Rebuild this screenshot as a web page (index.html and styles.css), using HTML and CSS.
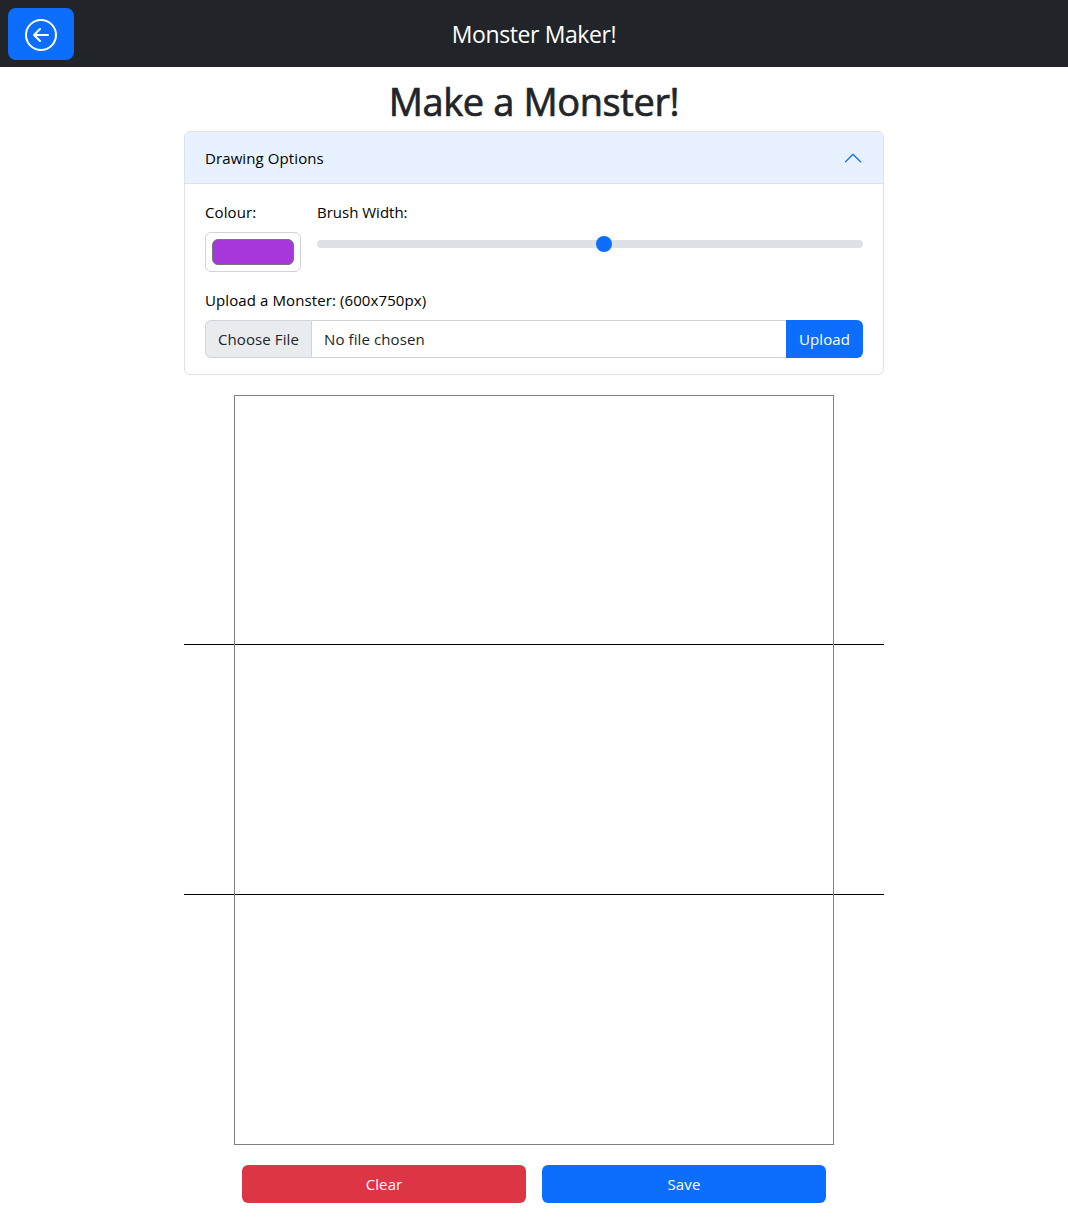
FILE: index.html
```html
<!DOCTYPE html>
<html lang="en">
<head>
<meta charset="utf-8">
<title>Monster Maker!</title>
<link rel="stylesheet" href="styles.css">
</head>
<body>
<header class="navbar">
  <button class="back" aria-label="Back">
    <svg width="32" height="32" viewBox="0 0 16 16" fill="currentColor"><path fill-rule="evenodd" d="M1 8a7 7 0 1 0 14 0A7 7 0 0 0 1 8m15 0A8 8 0 1 1 0 8a8 8 0 0 1 16 0m-4.500-.5a.5.5 0 0 1 0 1H5.707l2.147 2.146a.5.5 0 0 1-.708.708l-3-3a.5.5 0 0 1 0-.708l3-3a.5.5 0 1 1 .708.708L5.707 7.500z"/></svg>
  </button>
  <div class="brand">Monster Maker!</div>
</header>
<main class="page">
  <h1 class="title">Make a Monster!</h1>
  <section class="accordion">
    <div class="accordion-head">
      <span>Drawing Options</span>
      <svg class="chevron" width="20" height="20" viewBox="0 0 16 16" fill="currentColor"><path fill-rule="evenodd" d="M14.354 11.354a.5.5 0 0 1-.708 0L8 5.707l-5.646 5.647a.5.5 0 0 1-.708-.708l6-6a.5.5 0 0 1 .708 0l6 6a.5.5 0 0 1 0 .708"/></svg>
    </div>
    <div class="accordion-body">
      <div class="tools">
        <div class="field">
          <span>Colour:</span>
          <div class="colour"><div class="swatch"></div></div>
        </div>
        <div class="field grow">
          <span class="brush-label">Brush Width:</span>
          <div class="range"><div class="thumb"></div></div>
        </div>
      </div>
      <div class="field">
        <span>Upload a Monster: (600x750px)</span>
        <div class="file-group">
          <div class="choose">Choose File</div>
          <div class="filename">No file chosen</div>
          <button class="upload">Upload</button>
        </div>
      </div>
    </div>
  </section>
  <div class="board">
    <div class="guide"></div>
    <div class="guide"></div>
    <canvas class="canvas" width="598" height="748"></canvas>
  </div>
  <div class="actions">
    <button class="btn danger">Clear</button>
    <button class="btn primary">Save</button>
  </div>
</main>
</body>
</html>
```
FILE: styles.css
```css
* { box-sizing: border-box; }
body {
  margin: 0;
  background: #fff;
  color: #212529;
  font-family: "Open Sans", "Noto Sans", sans-serif;
  font-size: 15px;
  line-height: 24px;
  letter-spacing: 0.1px;
}
button { font: inherit; letter-spacing: inherit; border: 0; padding: 0; }
.navbar {
  display: grid;
  grid-template-columns: 66px 1fr 66px;
  align-items: center;
  height: 67px;
  padding: 0 8px;
  background: #212529;
  color: #fff;
}
.back {
  display: flex;
  align-items: center;
  justify-content: center;
  height: 52px;
  margin-top: 1px;
  padding-top: 2px;
  border-radius: 8px;
  background: #0d6efd;
  color: #fff;
}
.brand {
  padding-top: 1px;
  text-align: center;
  font-size: 23px;
  line-height: 36px;
  letter-spacing: -0.4px;
  white-space: nowrap;
}
.page { width: 700px; margin: 0 auto; padding-top: 10px; }
.title {
  margin: 0 0 6px;
  text-align: center;
  font-size: 38px;
  font-weight: 500;
  line-height: 48px;
  letter-spacing: -0.4px;
  -webkit-text-stroke: 0.7px currentColor;
  white-space: nowrap;
}
.accordion {
  border: 1px solid #dee2e6;
  border-radius: 6px;
  overflow: hidden;
  color: #000;
}
.accordion-head {
  display: flex;
  justify-content: space-between;
  align-items: center;
  height: 52px;
  padding: 0 20px;
  background: #e7f1ff;
  border-bottom: 1px solid #d9e0e8;
}
.chevron { color: #0d6efd; }
.accordion-body {
  display: flex;
  flex-direction: column;
  gap: 16px;
  padding: 16px 20px;
}
.tools { display: flex; gap: 16px; }
.field { display: flex; flex-direction: column; align-items: flex-start; gap: 8px; white-space: nowrap; }
.grow { flex: 1; }
.brush-label { letter-spacing: 0; }
.colour {
  width: 96px;
  height: 40px;
  padding: 6px;
  border: 1px solid #ced4da;
  border-radius: 6px;
}
.swatch { height: 26px; border: 1px solid #767676; border-radius: 6px; background: #a637db; }
.range {
  display: flex;
  align-items: center;
  width: 100%;
  height: 8px;
  margin-top: 8px;
  border-radius: 8px;
  background: #dee2e6;
}
.thumb { width: 16px; height: 16px; margin-left: 279px; border-radius: 50%; background: #0d6efd; }
.file-group { display: flex; width: 658px; height: 38px; color: #212529; }
.choose, .filename { display: flex; align-items: center; border: 1px solid #ced4da; }
.choose { width: 107px; justify-content: center; border-radius: 6px 0 0 6px; background: #e9ecef; }
.filename { flex: 1; border-width: 1px 0; padding-left: 12px; }
.upload { width: 77px; border-radius: 0 6px 6px 0; background: #0d6efd; color: #fff; }
.board { position: relative; height: 750px; margin: 20px 0; padding-top: 249px; }
.guide { height: 1px; margin-bottom: 249px; background: #000; }
.canvas { position: absolute; top: 0; left: 50px; width: 600px; height: 750px; border: 1px solid #808080; }
.actions { display: flex; gap: 16px; padding: 0 58px 20px; }
.btn { flex: 1; height: 38px; border-radius: 6px; color: #fff; }
.danger { background: #dc3545; }
.primary { background: #0d6efd; }
```
